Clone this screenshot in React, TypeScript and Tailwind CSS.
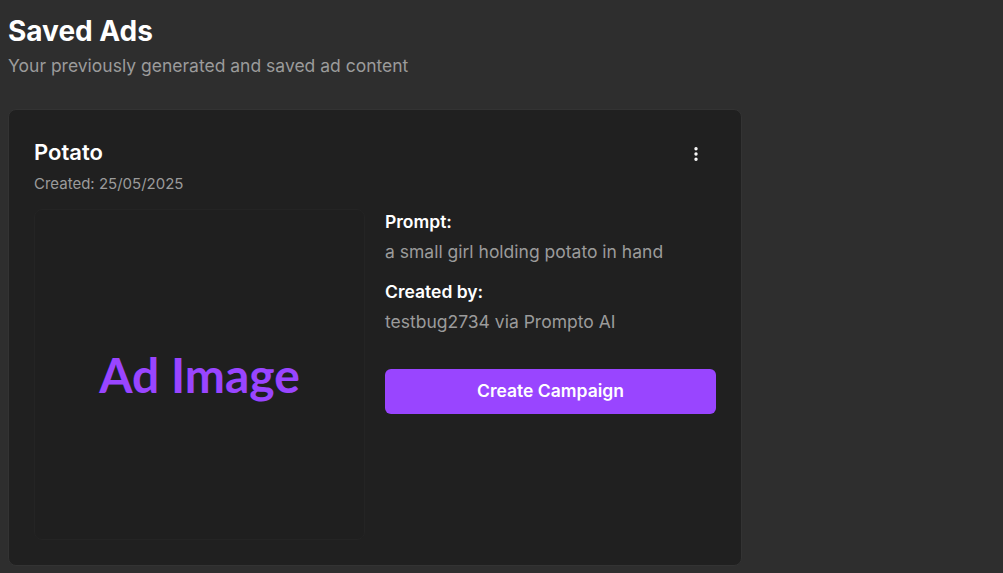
import { MoreVertical } from "lucide-react";

const ad = {
  title: "Potato",
  created: "25/05/2025",
  prompt: "a small girl holding potato in hand",
  author: "testbug2734 via Prompto AI",
};

function AdCard() {
  return (
    <div className="w-[734px] rounded-lg border border-[#333333] bg-[#202020] px-[25px] pt-[27px] pb-[25px]">
      <div className="flex items-start justify-between">
        <div>
          <h2 className="text-[22px] font-semibold leading-[30px] text-white">{ad.title}</h2>
          <p className="mt-[7px] text-[15px] leading-[20px] text-[#9b9b9b]">Created: {ad.created}</p>
        </div>
        <button className="mt-[8px] mr-[11px] text-white">
          <MoreVertical className="h-[18px] w-[18px]" strokeWidth={2.5} />
        </button>
      </div>

      <div className="mt-[15px] grid grid-cols-2 gap-[20px]">
        <div className="flex aspect-square items-center justify-center rounded-lg border border-[#242424] bg-[#1f1f1f]">
          <span className="font-['Lato',sans-serif] text-[48px] font-bold text-[#9945ff]">Ad Image</span>
        </div>

        <div>
          <h3 className="text-[17.5px] font-semibold leading-[26px] text-white">Prompt:</h3>
          <p className="mt-[4px] text-[17.5px] leading-[26px] text-[#9b9b9b]">{ad.prompt}</p>
          <h3 className="mt-[14px] text-[17.5px] font-semibold leading-[26px] text-white">Created by:</h3>
          <p className="mt-[4px] text-[17.5px] leading-[26px] text-[#9b9b9b]">{ad.author}</p>
          <button className="mt-[34px] h-[45px] w-full rounded-md bg-[#9945ff] text-[17.5px] font-semibold text-white">
            Create Campaign
          </button>
        </div>
      </div>
    </div>
  );
}

export default function App() {
  return (
    <div className="min-h-screen bg-[#2e2e2e] px-[8px] pt-[14px] font-['Inter',sans-serif]">
      <h1 className="text-[28px] font-bold leading-[34px] text-white">Saved Ads</h1>
      <p className="mt-[6px] text-[17.5px] leading-[24px] text-[#9b9b9b]">
        Your previously generated and saved ad content
      </p>
      <div className="mt-[31px]">
        <AdCard />
      </div>
    </div>
  );
}
